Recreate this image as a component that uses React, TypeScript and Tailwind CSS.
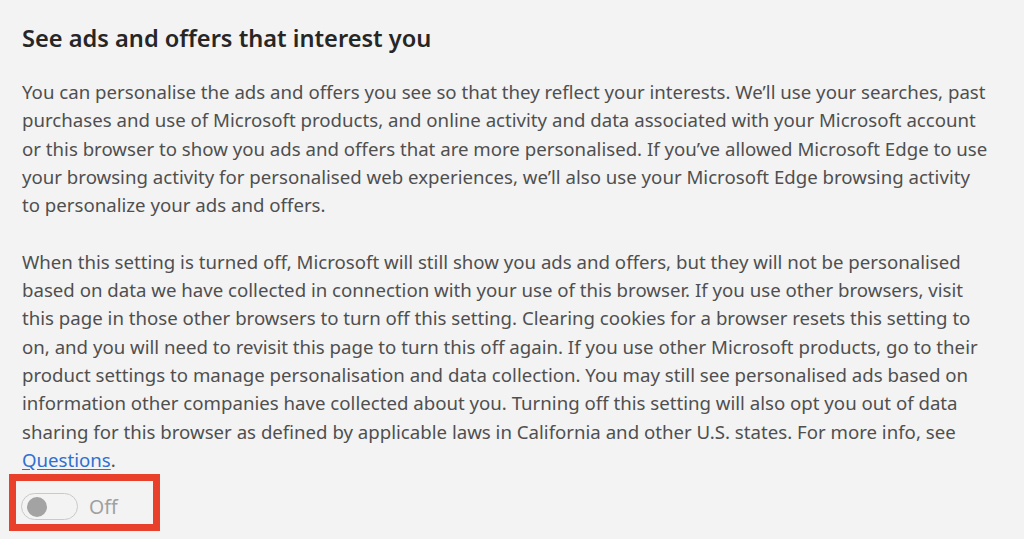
import React from 'react';

const intro = [
  'You can personalise the ads and offers you see so that they reflect your interests. We\u2019ll use your searches, past',
  'purchases and use of Microsoft products, and online activity and data associated with your Microsoft account',
  'or this browser to show you ads and offers that are more personalised. If you\u2019ve allowed Microsoft Edge to use',
  'your browsing activity for personalised web experiences, we\u2019ll also use your Microsoft Edge browsing activity',
  'to personalize your ads and offers.',
];

const details = [
  'When this setting is turned off, Microsoft will still show you ads and offers, but they will not be personalised',
  'based on data we have collected in connection with your use of this browser. If you use other browsers, visit',
  'this page in those other browsers to turn off this setting. Clearing cookies for a browser resets this setting to',
  'on, and you will need to revisit this page to turn this off again. If you use other Microsoft products, go to their',
  'product settings to manage personalisation and data collection. You may still see personalised ads based on',
  'information other companies have collected about you. Turning off this setting will also opt you out of data',
  'sharing for this browser as defined by applicable laws in California and other U.S. states. For more info, see',
];

function Toggle({ on }: { on: boolean }) {
  return (
    <div className="relative flex items-center gap-[11px] pl-[21px] h-[27px]">
      <span className="flex items-center w-[57px] h-[27px] rounded-full border border-[#c9c9c9] px-[5px]">
        <span className="w-[20px] h-[20px] rounded-full bg-[#a3a3a3]" />
      </span>
      <span className="text-[19.5px] text-[#a0a0a0]">{on ? 'On' : 'Off'}</span>
      {/* highlight frame */}
      <span className="absolute left-[9px] top-[-19px] w-[151px] h-[57px] border-[7px] border-[#e8402a]" />
    </div>
  );
}

export default function App() {
  return (
    <div
      className="w-[1024px] h-[539px] overflow-hidden bg-[#f3f3f3] pt-[22px]"
      style={{ fontFamily: '"Noto Sans", "Open Sans", sans-serif' }}
    >
      <h2 className="pl-[22px] text-[23.6px] leading-[32px] font-semibold text-[#262626]">
        See ads and offers that interest you
      </h2>
      <div className="pl-[22px] mt-[24px] text-[18.65px] leading-[28.3px] text-[#4f4f4f] whitespace-nowrap">
        {intro.map((l) => (
          <div key={l}>{l}</div>
        ))}
        <div className="h-[28.3px]" />
        {details.map((l) => (
          <div key={l}>{l}</div>
        ))}
        <div>
          <a href="#" className="text-[#2f6fd1] underline underline-offset-2">
            Questions
          </a>
          .
        </div>
      </div>
      <div className="mt-[19px]">
        <Toggle on={false} />
      </div>
    </div>
  );
}
